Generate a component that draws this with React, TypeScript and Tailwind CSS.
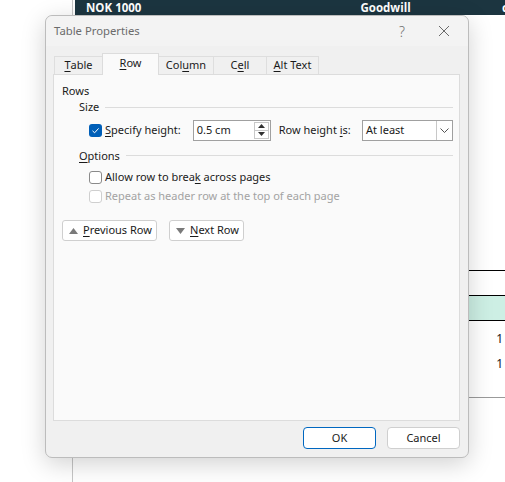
import React from "react";

const font = { fontFamily: '"Noto Sans", "Open Sans", sans-serif' };

function U({ children }: { children: React.ReactNode }) {
  return <span className="underline underline-offset-2 decoration-1">{children}</span>;
}

function Check({ checked, disabled }: { checked?: boolean; disabled?: boolean }) {
  if (checked) {
    return (
      <span className="flex h-[13px] w-[13px] shrink-0 items-center justify-center rounded-[3px] bg-[#005fb8]">
        <svg width="9" height="9" viewBox="0 0 9 9" fill="none">
          <path d="M1.5 4.8 L3.6 6.8 L7.6 2.4" stroke="white" strokeWidth="1" />
        </svg>
      </span>
    );
  }
  return (
    <span
      className={
        "h-[13px] w-[13px] shrink-0 rounded-[3px] border bg-white " +
        (disabled ? "border-[#cfcfcf]" : "border-[#8a8a8a]")
      }
    />
  );
}

function SectionTitle({ children, className }: { children: React.ReactNode; className?: string }) {
  return (
    <div className={"flex items-center gap-[6px] " + (className ?? "")}>
      <span className="whitespace-nowrap">{children}</span>
      <span className="h-px flex-1 bg-[#dcdcdc]" />
    </div>
  );
}

function Dialog() {
  const tabs = [
    { label: <><U>T</U>able</>, w: 49 },
    { label: <><U>R</U>ow</>, w: 57, active: true },
    { label: <>Col<U>u</U>mn</>, w: 56 },
    { label: <>C<U>e</U>ll</>, w: 54 },
    { label: <><U>A</U>lt Text</>, w: 53 },
  ];
  return (
    <div
      className="absolute left-[45px] top-[15px] flex h-[443px] w-[424px] flex-col whitespace-nowrap rounded-[7px] border border-[#bcbcbc] bg-[#f0f0f0] text-[11px] text-[#1a1a1a] shadow-[0_6px_24px_rgba(0,0,0,0.18)]"
      style={font}
    >
      {/* title bar */}
      <div className="flex h-[30px] items-center rounded-t-[7px] bg-[#f3f3f3] pl-[8px] pr-[16px]">
        <span className="text-[11.3px] text-[#6b6b6b]">Table Properties</span>
        <span className="ml-auto mr-[33px] text-[14px] font-light text-[#707070]">?</span>
        <svg width="12" height="12" viewBox="0 0 12 12" className="mr-[2px]">
          <path d="M1 1 L11 11 M11 1 L1 11" stroke="#6a6a6a" strokeWidth="1" />
        </svg>
      </div>

      {/* tabs */}
      <div className="mt-[7px] flex h-[21px] items-end pl-[8px]">
        {tabs.map((t, i) => (
          <div
            key={i}
            className={
              "flex items-center justify-center border border-b-0 " +
              (t.active
                ? "relative z-10 -mb-px h-[22px] border-[#dcdcdc] bg-[#fafafa] pb-[2px]"
                : "h-[18px] border-[#dedede] bg-[#f0f0f0]") +
              (i > 0 ? " -ml-px" : "")
            }
            style={{ width: t.w }}
          >
            {t.label}
          </div>
        ))}
      </div>

      {/* panel */}
      <div className="ml-[7px] h-[347px] w-[407px] border border-[#dcdcdc] bg-[#fafafa] pl-[8px] pr-[6px] pt-[7px]">
        <div className="leading-[17px]">Rows</div>
        <SectionTitle className="ml-[17px] leading-[16px]">Size</SectionTitle>

        <div className="ml-[27px] mt-[4px] flex h-[22px] items-center">
          <Check checked />
          <span className="ml-[3px]">
            <U>S</U>pecify height:
          </span>
          <div className="ml-[12px] flex h-[21px] w-[78px] items-center border border-[#a0a0a0] bg-white pl-[3px]">
            <span>0.5 cm</span>
            <div className="ml-auto mr-[1px] flex h-[17px] w-[15px] flex-col border border-[#c8c8c8]">
              <div className="flex flex-1 items-center justify-center border-b border-[#c8c8c8]">
                <svg width="7" height="4" viewBox="0 0 7 4">
                  <path d="M0 4 L3.5 0 L7 4 Z" fill="#303030" />
                </svg>
              </div>
              <div className="flex flex-1 items-center justify-center">
                <svg width="7" height="4" viewBox="0 0 7 4">
                  <path d="M0 0 L3.5 4 L7 0 Z" fill="#303030" />
                </svg>
              </div>
            </div>
          </div>
          <span className="ml-[8px]">
            Row height <U>i</U>s:
          </span>
          <div className="ml-auto flex h-[21px] w-[91px] items-center border border-[#a0a0a0] bg-white pl-[3px]">
            <span>At least</span>
            <div className="ml-auto flex h-[19px] w-[16px] items-center justify-center border-l border-[#c8c8c8]">
              <svg width="9" height="5" viewBox="0 0 9 5">
                <path d="M0.5 0.5 L4.5 4.5 L8.5 0.5" stroke="#404040" strokeWidth="0.9" fill="none" />
              </svg>
            </div>
          </div>
        </div>

        <SectionTitle className="ml-[17px] mt-[6px] leading-[17px]">
          <U>O</U>ptions
        </SectionTitle>

        <div className="ml-[27px] mt-[5px] flex h-[17px] items-center">
          <Check />
          <span className="ml-[3px]">
            Allow row to brea<U>k</U> across pages
          </span>
        </div>
        <div className="ml-[27px] mt-[2px] flex h-[17px] items-center text-[#a3a3a3]">
          <Check disabled />
          <span className="ml-[3px]">Repeat as header row at the top of each page</span>
        </div>

        <div className="mt-[15px] flex gap-[12px]">
          <button className="flex h-[21px] w-[95px] items-center rounded-[3px] border border-[#cfcfcf] bg-white pl-[6px]">
            <svg width="9" height="6" viewBox="0 0 9 6">
              <path d="M0 6 L4.5 0 L9 6 Z" fill="#7a7a7a" />
            </svg>
            <span className="ml-[5px]">
              <U>P</U>revious Row
            </span>
          </button>
          <button className="flex h-[21px] w-[75px] items-center rounded-[3px] border border-[#cfcfcf] bg-white pl-[6px]">
            <svg width="9" height="6" viewBox="0 0 9 6">
              <path d="M0 0 L4.5 6 L9 0 Z" fill="#7a7a7a" />
            </svg>
            <span className="ml-[5px]">
              <U>N</U>ext Row
            </span>
          </button>
        </div>
      </div>

      {/* footer */}
      <div className="mt-[6px] flex justify-end gap-[11px] pr-[8px]">
        <button className="h-[22px] w-[73px] rounded-[4px] border border-[#0067c0] bg-white">OK</button>
        <button className="h-[22px] w-[73px] rounded-[4px] border border-[#cfcfcf] bg-white">Cancel</button>
      </div>
    </div>
  );
}

export default function App() {
  return (
    <div className="relative h-[482px] w-[505px] overflow-hidden bg-white">
      {/* document behind */}
      <div className="absolute left-[72px] top-0 h-full w-px bg-[#c6c6c6]" />
      <div
        className="ml-[75px] flex h-[15px] items-center whitespace-nowrap bg-[#1c3540] text-[11.5px] font-bold leading-[15px] text-white"
        style={{ fontFamily: '"Open Sans", "Noto Sans", sans-serif' }}
      >
        <span className="ml-[11px]">NOK 1000</span>
        <span className="ml-[219px]">Goodwill</span>
        <span className="ml-auto -mr-[3px]">c</span>
      </div>
      <div className="ml-[468px] mt-[255px] flex flex-col text-[12px] text-[#222]" style={font}>
        <div className="h-px bg-black" />
        <div className="h-[24px]" />
        <div className="h-px bg-black" />
        <div className="h-[24px] bg-[#cdefe4]" />
        <div className="h-px bg-black" />
        <div className="h-[5px]" />
        <div className="flex h-[25px] items-center justify-end pr-[2px]">1</div>
        <div className="flex h-[25px] items-center justify-end pr-[2px]">1</div>
        <div className="h-[21px]" />
        <div className="h-px bg-[#9a9a9a]" />
      </div>
      <Dialog />
    </div>
  );
}
